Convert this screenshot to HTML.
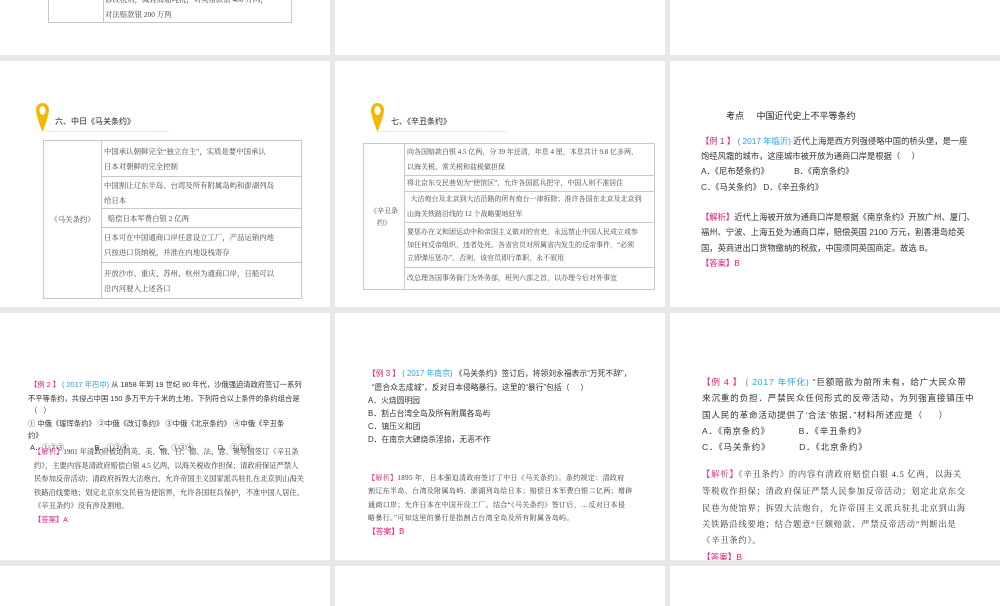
<!DOCTYPE html>
<html><head><meta charset="utf-8"><style>
*{margin:0;padding:0;box-sizing:border-box}
body{width:1000px;height:600px;background:#e8e8e8;position:relative;overflow:hidden;font-family:"Liberation Sans","Noto Sans CJK SC",sans-serif;color:#333}
.s{position:absolute;background:#fff;overflow:hidden}
.t{position:absolute;white-space:nowrap;line-height:1}
.serif{font-family:"Liberation Serif","Noto Serif CJK SC",serif}
.pk{color:#e3157d}.bl{color:#21a4dc}
table{position:absolute;border-collapse:collapse;font-family:"Liberation Serif","Noto Serif CJK SC",serif;font-size:7.4px;color:#444}
td{border:1px solid #c8c8c8;padding:0 2px;line-height:15px;vertical-align:middle}
.pin{position:absolute;width:13px;height:29px}
.ul{position:absolute;height:1px;background:#f6ecc8}
</style></head><body>

<!-- row1 -->
<div class="s" style="left:0;top:0;width:330px;height:55px">
  <div style="position:absolute;left:48px;top:-10px;width:244px;height:33px;border:1px solid #c8c8c8"></div>
  <div style="position:absolute;left:103px;top:-10px;width:1px;height:33px;background:#c8c8c8"></div>
  <div class="t serif" style="left:105px;top:-4px;font-size:7.4px;color:#444">修改税则，减轻商船吨税，对英赔款银 400 万两，</div>
  <div class="t serif" style="left:105px;top:11px;font-size:7.4px;color:#444">对法赔款银 200 万两</div>
</div>
<div class="s" style="left:335px;top:0;width:330px;height:55px"></div>
<div class="s" style="left:670px;top:0;width:330px;height:55px"></div>

<!-- row2 col1 -->
<div class="s" style="left:0;top:61px;width:330px;height:246px">
  <svg class="pin" style="left:36px;top:42px" viewBox="0 0 13 29"><path d="M6.5 0C2.8 0 0 3 0 7c0 6 6.5 22 6.5 22S13 13 13 7C13 3 10.2 0 6.5 0z" fill="#f5b800"/><ellipse cx="6.5" cy="7.5" rx="3" ry="4.5" fill="#fff"/></svg>
  <div class="ul" style="left:44px;top:70px;width:124px"></div>
  <div class="t" style="left:55px;top:57px;font-size:8px;color:#222">六、中日《马关条约》</div>
  <table style="left:43px;top:79px;width:259px">
    <tr style="height:36px"><td rowspan="5" style="width:58px;text-align:center">《马关条约》</td><td>中国承认朝鲜完全“独立自主”，实质是要中国承认<br>日本对朝鲜的完全控制</td></tr>
    <tr style="height:32px"><td>中国割让辽东半岛、台湾及所有附属岛屿和澎湖列岛<br>给日本</td></tr>
    <tr style="height:19px"><td>&nbsp;&nbsp;赔偿日本军费白银 2 亿两</td></tr>
    <tr style="height:35px"><td>日本可在中国通商口岸任意设立工厂，产品运销内地<br>只按进口货纳税，并准在内地设栈寄存</td></tr>
    <tr style="height:36px"><td>开放沙市、重庆、苏州、杭州为通商口岸，日船可以<br>沿内河驶入上述各口</td></tr>
  </table>
</div>

<!-- row2 col2 -->
<div class="s" style="left:335px;top:61px;width:330px;height:246px">
  <svg class="pin" style="left:36px;top:42px" viewBox="0 0 13 29"><path d="M6.5 0C2.8 0 0 3 0 7c0 6 6.5 22 6.5 22S13 13 13 7C13 3 10.2 0 6.5 0z" fill="#f5b800"/><ellipse cx="6.5" cy="7.5" rx="3" ry="4.5" fill="#fff"/></svg>
  <div class="ul" style="left:44px;top:70px;width:128px"></div>
  <div class="t" style="left:56px;top:57px;font-size:8px;color:#222">七、《辛丑条约》</div>
  <table style="left:28px;top:82px;width:292px;font-size:7px">
    <tr style="height:32px"><td rowspan="5" style="width:41px;text-align:center;line-height:12px">《辛丑条<br>约》</td><td>向各国赔款白银 4.5 亿两，分 39 年还清，年息 4 厘，本息共计 9.8 亿多两，<br>以海关税、常关税和盐税做担保</td></tr>
    <tr style="height:16px"><td>将北京东交民巷划为“使馆区”，允许各国派兵把守，中国人则不准居住</td></tr>
    <tr style="height:31px"><td>&nbsp;&nbsp;大沽炮台及北京到大沽沿路的所有炮台一律拆除；准许各国在北京及北京到<br>山海关铁路沿线的 12 个战略要地驻军</td></tr>
    <tr style="height:45px"><td style="line-height:13px">要惩办在义和团运动中和帝国主义做对的官吏，永远禁止中国人民成立或参<br>加任何反帝组织，违者处死。各省官员对所属省内发生的反帝事件，“必须<br>立即弹压惩办”，否则，该官员即行革职，永不叙用</td></tr>
    <tr style="height:22px"><td>改总理各国事务衙门为外务部，班列六部之首，以办理今后对外事宜</td></tr>
  </table>
</div>

<!-- row2 col3 -->
<div class="s" style="left:670px;top:61px;width:330px;height:246px;font-size:8.3px">
  <div class="t" style="left:56px;top:51px;font-size:9px;color:#222">考点&nbsp;&nbsp;&nbsp;&nbsp;&nbsp;中国近代史上不平等条约</div>
  <div class="t" style="left:31px;top:76px"><span class="pk">【例 1 】</span> <span class="bl">( 2017 年临沂)</span> 近代上海是西方列强侵略中国的桥头堡，是一座</div>
  <div class="t" style="left:31px;top:91px">饱经风霜的城市，这座城市被开放为通商口岸是根据（&nbsp;&nbsp;&nbsp;&nbsp;&nbsp;）</div>
  <div class="t" style="left:31px;top:106px">A．《尼布楚条约》&nbsp;&nbsp;&nbsp;&nbsp;&nbsp;&nbsp;&nbsp;&nbsp;&nbsp;&nbsp;&nbsp;B．《南京条约》</div>
  <div class="t" style="left:31px;top:122px">C．《马关条约》 D．《辛丑条约》</div>
  <div class="t" style="left:31px;top:152px"><span class="pk">【解析】</span>近代上海被开放为通商口岸是根据《南京条约》开放广州、厦门、</div>
  <div class="t" style="left:31px;top:167px">福州、宁波、上海五处为通商口岸，赔偿英国 2100 万元，割香港岛给英</div>
  <div class="t" style="left:31px;top:183px">国，英商进出口货物缴纳的税款，中国须同英国商定。故选 B。</div>
  <div class="t" style="left:31px;top:198px"><span class="pk">【答案】B</span></div>
</div>

<!-- row3 col1 -->
<div class="s" style="left:0;top:313px;width:330px;height:247px;font-size:7.3px">
  <div class="t" style="left:30px;top:68px"><span class="pk">【例 2 】</span> <span class="bl">( 2017 年巴中)</span> 从 1858 年到 19 世纪 80 年代，沙俄强迫清政府签订一系列</div>
  <div class="t" style="left:28px;top:82px">不平等条约，共侵占中国 150 多万平方千米的土地，下列符合以上条件的条约组合是</div>
  <div class="t" style="left:30px;top:94px">（&nbsp;&nbsp;&nbsp;）</div>
  <div class="t" style="left:28px;top:107px">① 中俄《瑷珲条约》 ②中俄《改订条约》 ③中俄《北京条约》 ④中俄《辛丑条</div>
  <div class="t" style="left:28px;top:119px">约》</div>
  <div class="t" style="left:30px;top:131px">A．①②③&nbsp;&nbsp;&nbsp;&nbsp;&nbsp;&nbsp;&nbsp;&nbsp;&nbsp;&nbsp;&nbsp;&nbsp;&nbsp;&nbsp;&nbsp;B．①②④&nbsp;&nbsp;&nbsp;&nbsp;&nbsp;&nbsp;&nbsp;&nbsp;&nbsp;&nbsp;&nbsp;&nbsp;&nbsp;&nbsp;&nbsp;C．①③④&nbsp;&nbsp;&nbsp;&nbsp;&nbsp;&nbsp;&nbsp;&nbsp;&nbsp;&nbsp;&nbsp;&nbsp;D．②③④</div>
  <div class="t serif" style="left:34px;top:135px"><span class="pk">【解析】</span>1901 年清政府被迫同英、美、俄、日、德、法、意、奥等国签订《辛丑条</div>
  <div class="t serif" style="left:34px;top:149px">约》，主要内容是清政府赔偿白银 4.5 亿两，以海关税收作担保；清政府保证严禁人</div>
  <div class="t serif" style="left:34px;top:162px">民参加反帝活动；清政府拆毁大沽炮台，允许帝国主义国家派兵驻扎在北京到山海关</div>
  <div class="t serif" style="left:34px;top:176px">铁路沿线要地；划定北京东交民巷为使馆界，允许各国驻兵保护，不准中国人居住。</div>
  <div class="t serif" style="left:34px;top:189px">《辛丑条约》没有涉及割地。</div>
  <div class="t" style="left:34px;top:203px"><span class="pk">【答案】A</span></div>
</div>

<!-- row3 col2 -->
<div class="s" style="left:335px;top:313px;width:330px;height:247px;font-size:7.8px">
  <div class="t" style="left:33px;top:57px"><span class="pk">【例 3 】</span> <span class="bl">( 2017 年南京)</span> 《马关条约》签订后，将领刘永福表示“万死不辞”，</div>
  <div class="t" style="left:37px;top:71px">“愿合众志成城”，反对日本侵略暴行。这里的“暴行”包括（&nbsp;&nbsp;&nbsp;&nbsp;&nbsp;）</div>
  <div class="t" style="left:33px;top:84px">A．火烧圆明园</div>
  <div class="t" style="left:33px;top:97px">B．割占台湾全岛及所有附属各岛屿</div>
  <div class="t" style="left:33px;top:110px">C．镇压义和团</div>
  <div class="t" style="left:33px;top:123px">D．在南京大肆烧杀淫掠，无恶不作</div>
  <div class="t serif" style="left:33px;top:162px;font-size:7px;letter-spacing:0.35px"><span class="pk">【解析】</span>1895 年，日本强迫清政府签订了中日《马关条约》。条约规定：清政府</div>
  <div class="t serif" style="left:33px;top:175px;font-size:7px;letter-spacing:0.35px">割辽东半岛、台湾及附属岛屿、澎湖列岛给日本；赔偿日本军费白银二亿两；增辟</div>
  <div class="t serif" style="left:33px;top:189px;font-size:7px;letter-spacing:0.35px">通商口岸；允许日本在中国开设工厂。结合“《马关条约》签订后，…反对日本侵</div>
  <div class="t serif" style="left:33px;top:202px;font-size:7px;letter-spacing:0.35px">略暴行。”可知这里的暴行是指割占台湾全岛及所有附属各岛屿。</div>
  <div class="t" style="left:33px;top:215px"><span class="pk">【答案】B</span></div>
</div>

<!-- row3 col3 -->
<div class="s" style="left:670px;top:313px;width:330px;height:247px;font-size:8.6px">
  <div class="t" style="left:32px;top:65px;letter-spacing:0.8px"><span class="pk">【例 4 】</span> <span class="bl">( 2017 年怀化)</span> “巨额赔款为前所未有，给广大民众带</div>
  <div class="t" style="left:32px;top:81px;letter-spacing:0.8px">来沉重的负担．严禁民众任何形式的反帝活动，为列强直接镇压中</div>
  <div class="t" style="left:32px;top:98px;letter-spacing:0.8px">国人民的革命活动提供了‘合法’依据．”材料所述应是（&nbsp;&nbsp;&nbsp;&nbsp;&nbsp;）</div>
  <div class="t" style="left:32px;top:114px;letter-spacing:0.8px">A．《南京条约》&nbsp;&nbsp;&nbsp;&nbsp;&nbsp;&nbsp;&nbsp;&nbsp;&nbsp;B．《辛丑条约》</div>
  <div class="t" style="left:32px;top:130px;letter-spacing:0.8px">C．《马关条约》&nbsp;&nbsp;&nbsp;&nbsp;&nbsp;&nbsp;&nbsp;&nbsp;&nbsp;D．《北京条约》</div>
  <div class="t serif" style="left:32px;top:158px;font-size:8.3px;letter-spacing:0.8px"><span class="pk">【解析】</span>《辛丑条约》的内容有清政府赔偿白银 4.5 亿两，以海关</div>
  <div class="t serif" style="left:32px;top:175px;font-size:8.3px;letter-spacing:0.8px">等税收作担保；清政府保证严禁人民参加反帝活动；划定北京东交</div>
  <div class="t serif" style="left:32px;top:192px;font-size:8.3px;letter-spacing:0.8px">民巷为使馆界；拆毁大沽炮台，允许帝国主义派兵驻扎北京到山海</div>
  <div class="t serif" style="left:32px;top:208px;font-size:8.3px;letter-spacing:0.8px">关铁路沿线要地；结合题意“巨额赔款、严禁反帝活动”判断出是</div>
  <div class="t serif" style="left:32px;top:224px;font-size:8.3px;letter-spacing:0.8px">《辛丑条约》。</div>
  <div class="t" style="left:32px;top:240px"><span class="pk">【答案】B</span></div>
</div>

<!-- row4 -->
<div class="s" style="left:0;top:566px;width:330px;height:40px"></div>
<div class="s" style="left:335px;top:566px;width:330px;height:40px"></div>
<div class="s" style="left:670px;top:566px;width:330px;height:40px"></div>
</body></html>
